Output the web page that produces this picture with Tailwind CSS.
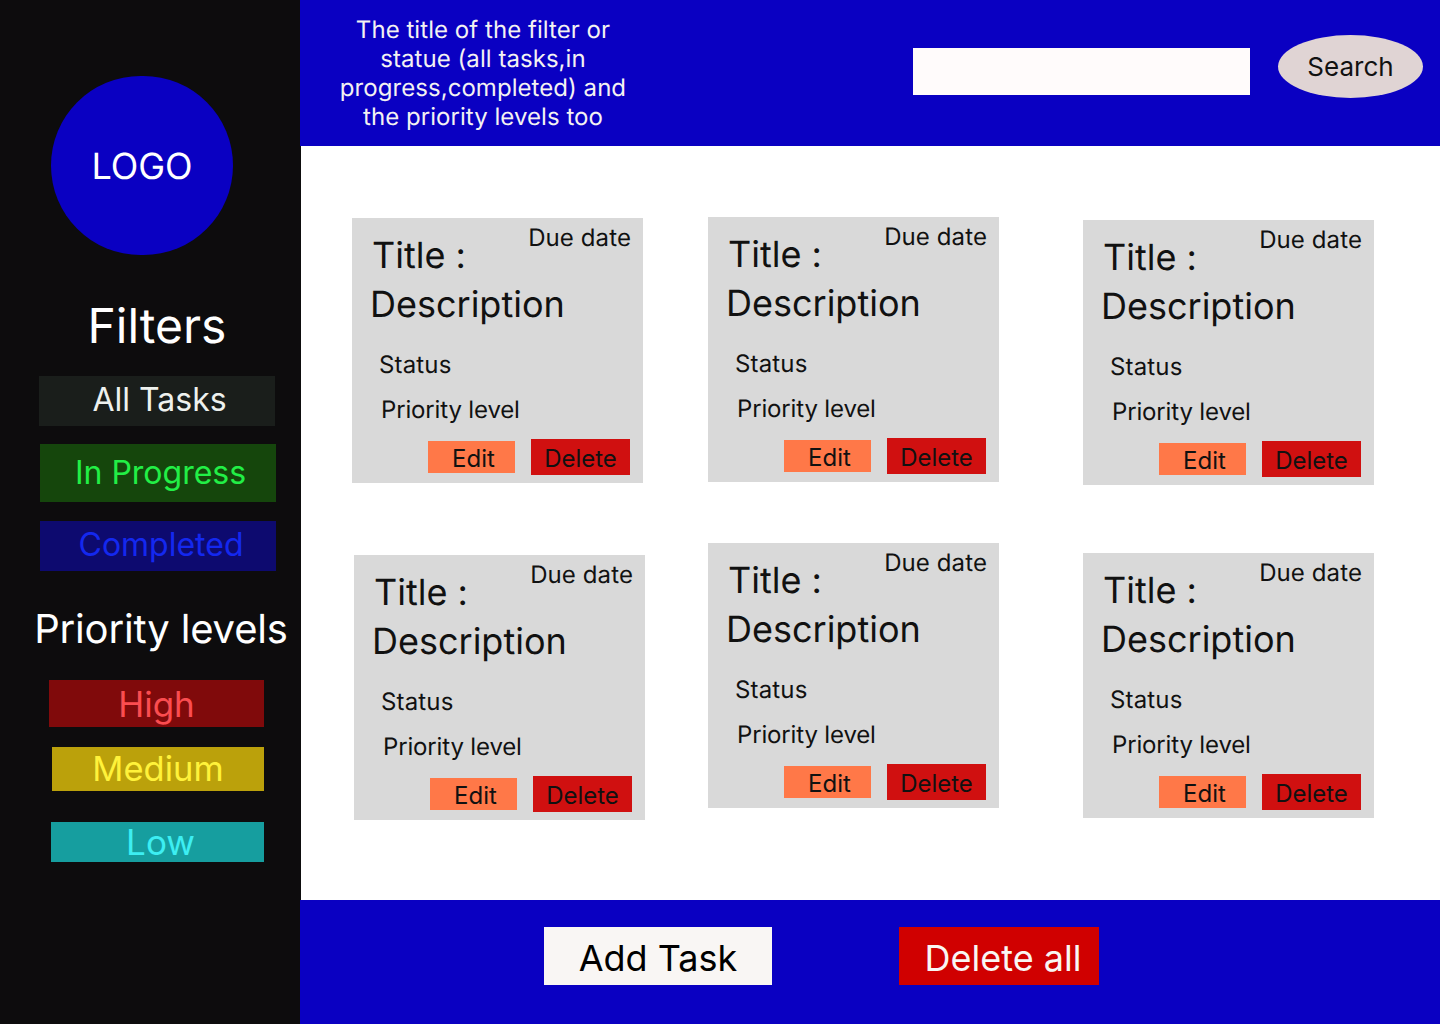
<!DOCTYPE html>
<html lang="en">
<head>
  <meta charset="UTF-8" />
  <title>Task Board</title>
  <script src="https://cdn.jsdelivr.net/npm/@tailwindcss/browser@4"></script>
</head>
<body class="h-[1024px] w-[1440px] overflow-hidden flex bg-white text-[#111] font-['Inter',sans-serif] antialiased [text-rendering:geometricPrecision]">
  <!-- sidebar -->
  <aside class="w-[301px] shrink-0 bg-[#0d0c0d] text-white flex flex-col items-start">
    <div class="w-[182px] h-[179px] mt-[76px] ml-[51px] rounded-full bg-[#0a00c2] flex items-center justify-center text-[36px]">LOGO</div>
    <h2 class="w-[236px] ml-[39px] mt-[42px] text-center text-[48px] leading-[58px]">Filters</h2>
    <button class="w-[236px] h-[50px] ml-[39px] mt-[21px] pl-[5px] pb-[2px] bg-[#1a1e1b] text-[32px] leading-none text-[#eef1ee]">All Tasks</button>
    <button class="w-[236px] h-[58px] ml-[40px] mt-[18px] pl-[5px] bg-[#15460c] text-[32px] leading-none text-[#22ef46]">In Progress</button>
    <button class="w-[236px] h-[50px] ml-[40px] mt-[19px] pl-[6px] pb-[2px] bg-[#0d0a6f] text-[32px] leading-none text-[#1428ef]">Completed</button>
    <h2 class="w-[300px] mt-[34px] text-center text-[40px] leading-[48px] tracking-[-0.15px] translate-x-[11px]">Priority levels</h2>
    <button class="w-[215px] h-[47px] ml-[49px] mt-[27px] pt-[2px] bg-[#800a0b] text-[35px] leading-none text-[#fb4d50]">High</button>
    <button class="w-[212px] h-[44px] ml-[52px] mt-[20px] bg-[#bba10b] text-[34.5px] leading-none text-[#fff23a]">Medium</button>
    <button class="w-[213px] h-[40px] ml-[51px] mt-[31px] pl-[6px] bg-[#169e9f] text-[35px] leading-none text-[#3deef2]">Low</button>
  </aside>

  <div class="flex-1 flex flex-col">
    <!-- top bar -->
    <header class="h-[146px] -ml-[1px] bg-[#0a00c2] flex items-center">
      <p class="w-[300px] ml-[33px] text-center text-[24px] leading-[29px] tracking-[0.05px] text-[#f4f2f2]">The title of the filter or statue (all tasks,in progress,completed) and the priority levels too</p>
      <input class="w-[337px] h-[47px] ml-[280px] -translate-y-[2px] bg-[#fffbfb]" type="text" />
      <button class="w-[145px] h-[63px] ml-[28px] -translate-y-[7px] rounded-[50%] bg-[#e0d4d4] text-[26px]">Search</button>
    </header>

    <!-- task cards -->
    <main class="flex-1">
      <div class="h-[340px] flex items-start">
        <article class="w-[291px] h-[265px] ml-[51px] mt-[72px] bg-[#d9d9d9] flex flex-col">
          <div class="flex justify-between">
            <h3 class="ml-[20px] mt-[15px] text-[36px] leading-[44px]">Title :</h3>
            <span class="mr-[12px] mt-[5px] text-[24px] leading-[30px] tracking-[0.1px]">Due date</span>
          </div>
          <p class="ml-[18px] mt-[5px] text-[36px] leading-[44px]">Description</p>
          <p class="ml-[27px] mt-[24px] text-[24px] leading-[30px] tracking-[0.15px]">Status</p>
          <p class="ml-[29px] mt-[15px] text-[24px] leading-[30px] tracking-[-0.15px]">Priority level</p>
          <div class="flex items-center justify-end gap-[16px] mr-[13px] mt-[14px]">
            <button class="w-[87px] h-[32px] pl-[4px] bg-[#ff7848] text-[24px]">Edit</button>
            <button class="w-[99px] h-[36px] pt-[4px] bg-[#d01010] text-[24px] leading-none">Delete</button>
          </div>
        </article>
        <article class="w-[291px] h-[265px] ml-[65px] mt-[71px] bg-[#d9d9d9] flex flex-col">
          <div class="flex justify-between">
            <h3 class="ml-[20px] mt-[15px] text-[36px] leading-[44px]">Title :</h3>
            <span class="mr-[12px] mt-[5px] text-[24px] leading-[30px] tracking-[0.1px]">Due date</span>
          </div>
          <p class="ml-[18px] mt-[5px] text-[36px] leading-[44px]">Description</p>
          <p class="ml-[27px] mt-[24px] text-[24px] leading-[30px] tracking-[0.15px]">Status</p>
          <p class="ml-[29px] mt-[15px] text-[24px] leading-[30px] tracking-[-0.15px]">Priority level</p>
          <div class="flex items-center justify-end gap-[16px] mr-[13px] mt-[14px]">
            <button class="w-[87px] h-[32px] pl-[4px] bg-[#ff7848] text-[24px]">Edit</button>
            <button class="w-[99px] h-[36px] pt-[4px] bg-[#d01010] text-[24px] leading-none">Delete</button>
          </div>
        </article>
        <article class="w-[291px] h-[265px] ml-[84px] mt-[74px] bg-[#d9d9d9] flex flex-col">
          <div class="flex justify-between">
            <h3 class="ml-[20px] mt-[15px] text-[36px] leading-[44px]">Title :</h3>
            <span class="mr-[12px] mt-[5px] text-[24px] leading-[30px] tracking-[0.1px]">Due date</span>
          </div>
          <p class="ml-[18px] mt-[5px] text-[36px] leading-[44px]">Description</p>
          <p class="ml-[27px] mt-[24px] text-[24px] leading-[30px] tracking-[0.15px]">Status</p>
          <p class="ml-[29px] mt-[15px] text-[24px] leading-[30px] tracking-[-0.15px]">Priority level</p>
          <div class="flex items-center justify-end gap-[16px] mr-[13px] mt-[14px]">
            <button class="w-[87px] h-[32px] pl-[4px] bg-[#ff7848] text-[24px]">Edit</button>
            <button class="w-[99px] h-[36px] pt-[4px] bg-[#d01010] text-[24px] leading-none">Delete</button>
          </div>
        </article>
      </div>
      <div class="flex items-start">
        <article class="w-[291px] h-[265px] ml-[53px] mt-[69px] bg-[#d9d9d9] flex flex-col">
          <div class="flex justify-between">
            <h3 class="ml-[20px] mt-[15px] text-[36px] leading-[44px]">Title :</h3>
            <span class="mr-[12px] mt-[5px] text-[24px] leading-[30px] tracking-[0.1px]">Due date</span>
          </div>
          <p class="ml-[18px] mt-[5px] text-[36px] leading-[44px]">Description</p>
          <p class="ml-[27px] mt-[24px] text-[24px] leading-[30px] tracking-[0.15px]">Status</p>
          <p class="ml-[29px] mt-[15px] text-[24px] leading-[30px] tracking-[-0.15px]">Priority level</p>
          <div class="flex items-center justify-end gap-[16px] mr-[13px] mt-[14px]">
            <button class="w-[87px] h-[32px] pl-[4px] bg-[#ff7848] text-[24px]">Edit</button>
            <button class="w-[99px] h-[36px] pt-[4px] bg-[#d01010] text-[24px] leading-none">Delete</button>
          </div>
        </article>
        <article class="w-[291px] h-[265px] ml-[63px] mt-[57px] bg-[#d9d9d9] flex flex-col">
          <div class="flex justify-between">
            <h3 class="ml-[20px] mt-[15px] text-[36px] leading-[44px]">Title :</h3>
            <span class="mr-[12px] mt-[5px] text-[24px] leading-[30px] tracking-[0.1px]">Due date</span>
          </div>
          <p class="ml-[18px] mt-[5px] text-[36px] leading-[44px]">Description</p>
          <p class="ml-[27px] mt-[24px] text-[24px] leading-[30px] tracking-[0.15px]">Status</p>
          <p class="ml-[29px] mt-[15px] text-[24px] leading-[30px] tracking-[-0.15px]">Priority level</p>
          <div class="flex items-center justify-end gap-[16px] mr-[13px] mt-[14px]">
            <button class="w-[87px] h-[32px] pl-[4px] bg-[#ff7848] text-[24px]">Edit</button>
            <button class="w-[99px] h-[36px] pt-[4px] bg-[#d01010] text-[24px] leading-none">Delete</button>
          </div>
        </article>
        <article class="w-[291px] h-[265px] ml-[84px] mt-[67px] bg-[#d9d9d9] flex flex-col">
          <div class="flex justify-between">
            <h3 class="ml-[20px] mt-[15px] text-[36px] leading-[44px]">Title :</h3>
            <span class="mr-[12px] mt-[5px] text-[24px] leading-[30px] tracking-[0.1px]">Due date</span>
          </div>
          <p class="ml-[18px] mt-[5px] text-[36px] leading-[44px]">Description</p>
          <p class="ml-[27px] mt-[24px] text-[24px] leading-[30px] tracking-[0.15px]">Status</p>
          <p class="ml-[29px] mt-[15px] text-[24px] leading-[30px] tracking-[-0.15px]">Priority level</p>
          <div class="flex items-center justify-end gap-[16px] mr-[13px] mt-[14px]">
            <button class="w-[87px] h-[32px] pl-[4px] bg-[#ff7848] text-[24px]">Edit</button>
            <button class="w-[99px] h-[36px] pt-[4px] bg-[#d01010] text-[24px] leading-none">Delete</button>
          </div>
        </article>
      </div>
    </main>

    <!-- bottom bar -->
    <footer class="h-[124px] -ml-[1px] bg-[#0a00c2] flex items-start">
      <button class="w-[228px] h-[58px] ml-[244px] mt-[27px] pt-[4px] bg-[#f9f6f4] text-[36px] leading-none text-black">Add Task</button>
      <button class="w-[200px] h-[58px] ml-[127px] mt-[27px] pt-[4px] pl-[8px] bg-[#d00000] text-[36px] leading-none text-[#f9f6f4]">Delete all</button>
    </footer>
  </div>
</body>
</html>
